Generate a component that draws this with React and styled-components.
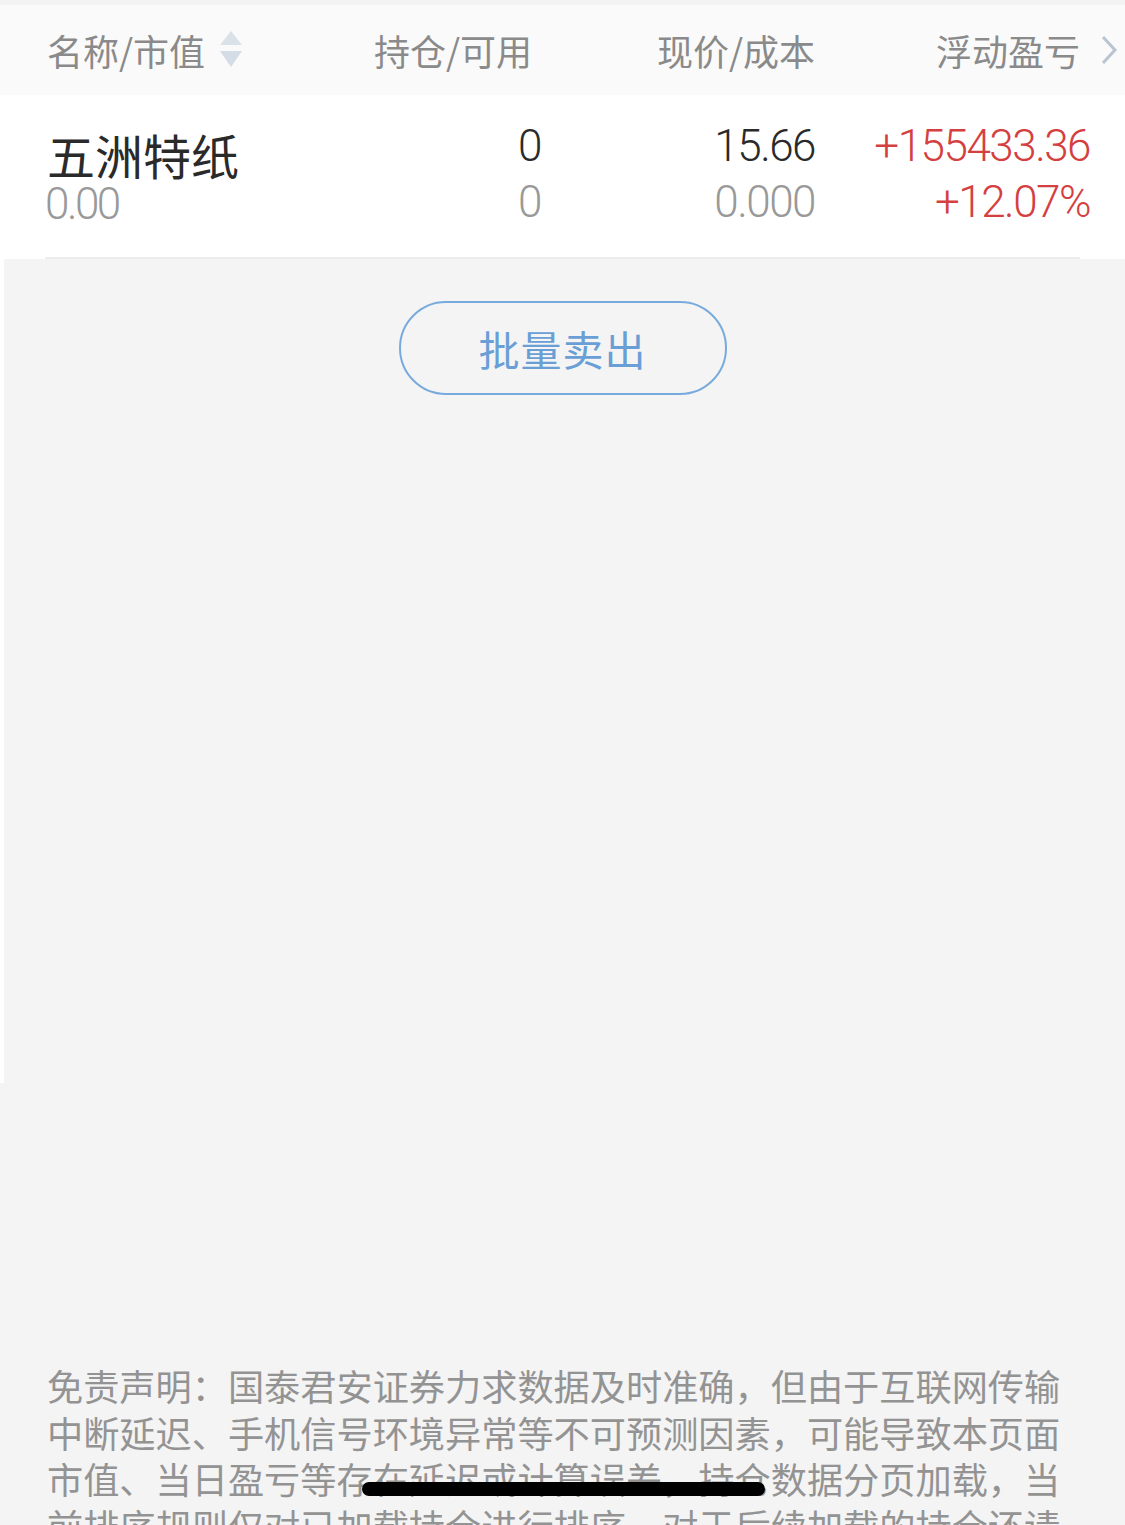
import React from "react";
import styled, { createGlobalStyle } from "styled-components";

const Global = createGlobalStyle`
  html, body { margin: 0; padding: 0; background: #f4f4f4; }
  body { font-family: "Noto Sans CJK SC", "Noto Sans", sans-serif; overflow: hidden; }
`;

const Page = styled.div`
  width: 1125px;
  height: 1525px;
  background: #f4f4f4;
  position: relative;
  overflow: hidden;
`;

const TopStrip = styled.div`
  height: 5px;
  background: #f3f3f3;
`;

const HeaderRow = styled.div`
  height: 90px;
  background: #fafafa;
  display: grid;
  grid-template-columns: 300px 185px 283px 265px;
  align-items: center;
  padding-left: 47px;
  font-size: 36px;
  color: #8a8a8a;
  line-height: 1;
`;

const HeadCell = styled.div`
  display: flex;
  align-items: center;
  justify-content: ${(p) => (p.$right ? "flex-end" : "flex-start")};
  gap: ${(p) => p.$gap || 0}px;
  white-space: nowrap;
`;

const HeadTail = styled.div`
  display: flex;
  align-items: center;
  justify-content: flex-end;
  white-space: nowrap;
  position: relative;
`;

const Chevron = styled.svg`
  position: absolute;
  right: -38px;
  top: 50%;
  transform: translateY(-50%);
`;

const Row = styled.div`
  background: #fff;
  height: 164px;
  display: grid;
  grid-template-columns: 300px 194px 274px 275px;
  padding-left: 47px;
  position: relative;
  box-sizing: border-box;
  &::after {
    content: "";
    position: absolute;
    left: 45px;
    right: 45px;
    bottom: 0;
    height: 2px;
    background: #ececec;
  }
`;

const NameCell = styled.div`
  padding-top: 29px;
  display: flex;
  flex-direction: column;
`;

const StockName = styled.div`
  font-size: 48px;
  line-height: 60px;
  color: #2a2a2a;
`;

const Num = styled.div`
  font-family: Roboto, "Liberation Sans", sans-serif;
  font-weight: 300;
  font-size: 44px;
  letter-spacing: -1.5px;
  line-height: ${(p) => p.$lh || 56}px;
  color: ${(p) => p.$color || "#2a2a2a"};
  text-align: right;
  white-space: nowrap;
`;

const SubNum = styled(Num)`
  text-align: left;
  margin-left: -2px;
  letter-spacing: -2.5px;
`;

const NumCell = styled.div`
  padding-top: 23px;
  display: flex;
  flex-direction: column;
  align-items: flex-end;
`;

const ListArea = styled.div`
  height: 824px;
  border-left: 4px solid #fff;
  background: #f4f4f4;
  display: flex;
  flex-direction: column;
  align-items: center;
  padding-top: 42px;
  box-sizing: border-box;
`;

const SellButton = styled.button`
  width: 328px;
  height: 94px;
  margin-left: -4px;
  border: 2px solid #78aadd;
  border-radius: 47px;
  background: transparent;
  color: #6a9fd6;
  font-family: "Noto Sans CJK SC", sans-serif;
  font-size: 41px;
  letter-spacing: 1px;
  display: flex;
  align-items: center;
  justify-content: center;
  padding: 0;
`;

const Disclaimer = styled.p`
  margin: 0;
  margin-top: 279px;
  padding-left: 47px;
  width: 1030px;
  font-size: 36.2px;
  line-height: 46.5px;
  color: #939393;
`;

const HomeBar = styled.div`
  position: absolute;
  left: 362px;
  top: 1482px;
  width: 403px;
  height: 14px;
  border-radius: 7px;
  background: #000;
`;

const SortIcon = () => (
  <svg width="22" height="38" viewBox="0 0 22 38">
    <polygon points="11,0 22,14 0,14" fill="#d9e1e9" />
    <polygon points="0,20 22,20 11,36" fill="#d4dce5" />
  </svg>
);

export default function App() {
  return (
    <Page>
      <Global />
      <TopStrip />
      <HeaderRow>
        <HeadCell $gap={15}>
          名称/市值
          <SortIcon />
        </HeadCell>
        <HeadCell $right>持仓/可用</HeadCell>
        <HeadCell $right>现价/成本</HeadCell>
        <HeadTail>
          浮动盈亏
          <Chevron width="18" height="32" viewBox="0 0 18 32">
            <polyline points="3,3 15,16 3,29" fill="none" stroke="#b9c4d3" strokeWidth="3" />
          </Chevron>
        </HeadTail>
      </HeaderRow>
      <Row>
        <NameCell>
          <StockName>五洲特纸</StockName>
          <SubNum $lh={40} $color="#999">0.00</SubNum>
        </NameCell>
        <NumCell>
          <Num>0</Num>
          <Num $color="#999">0</Num>
        </NumCell>
        <NumCell>
          <Num>15.66</Num>
          <Num $color="#999">0.000</Num>
        </NumCell>
        <NumCell>
          <Num $color="#d4403f">+155433.36</Num>
          <Num $color="#d4403f">+12.07%</Num>
        </NumCell>
      </Row>
      <ListArea>
        <SellButton>批量卖出</SellButton>
      </ListArea>
      <Disclaimer>
        免责声明：国泰君安证券力求数据及时准确，但由于互联网传输中断延迟、手机信号环境异常等不可预测因素，可能导致本页面市值、当日盈亏等存在延迟或计算误差，持仓数据分页加载，当前排序规则仅对已加载持仓进行排序，对于后续加载的持仓还请您下拉加载后查看。
      </Disclaimer>
      <HomeBar />
    </Page>
  );
}
